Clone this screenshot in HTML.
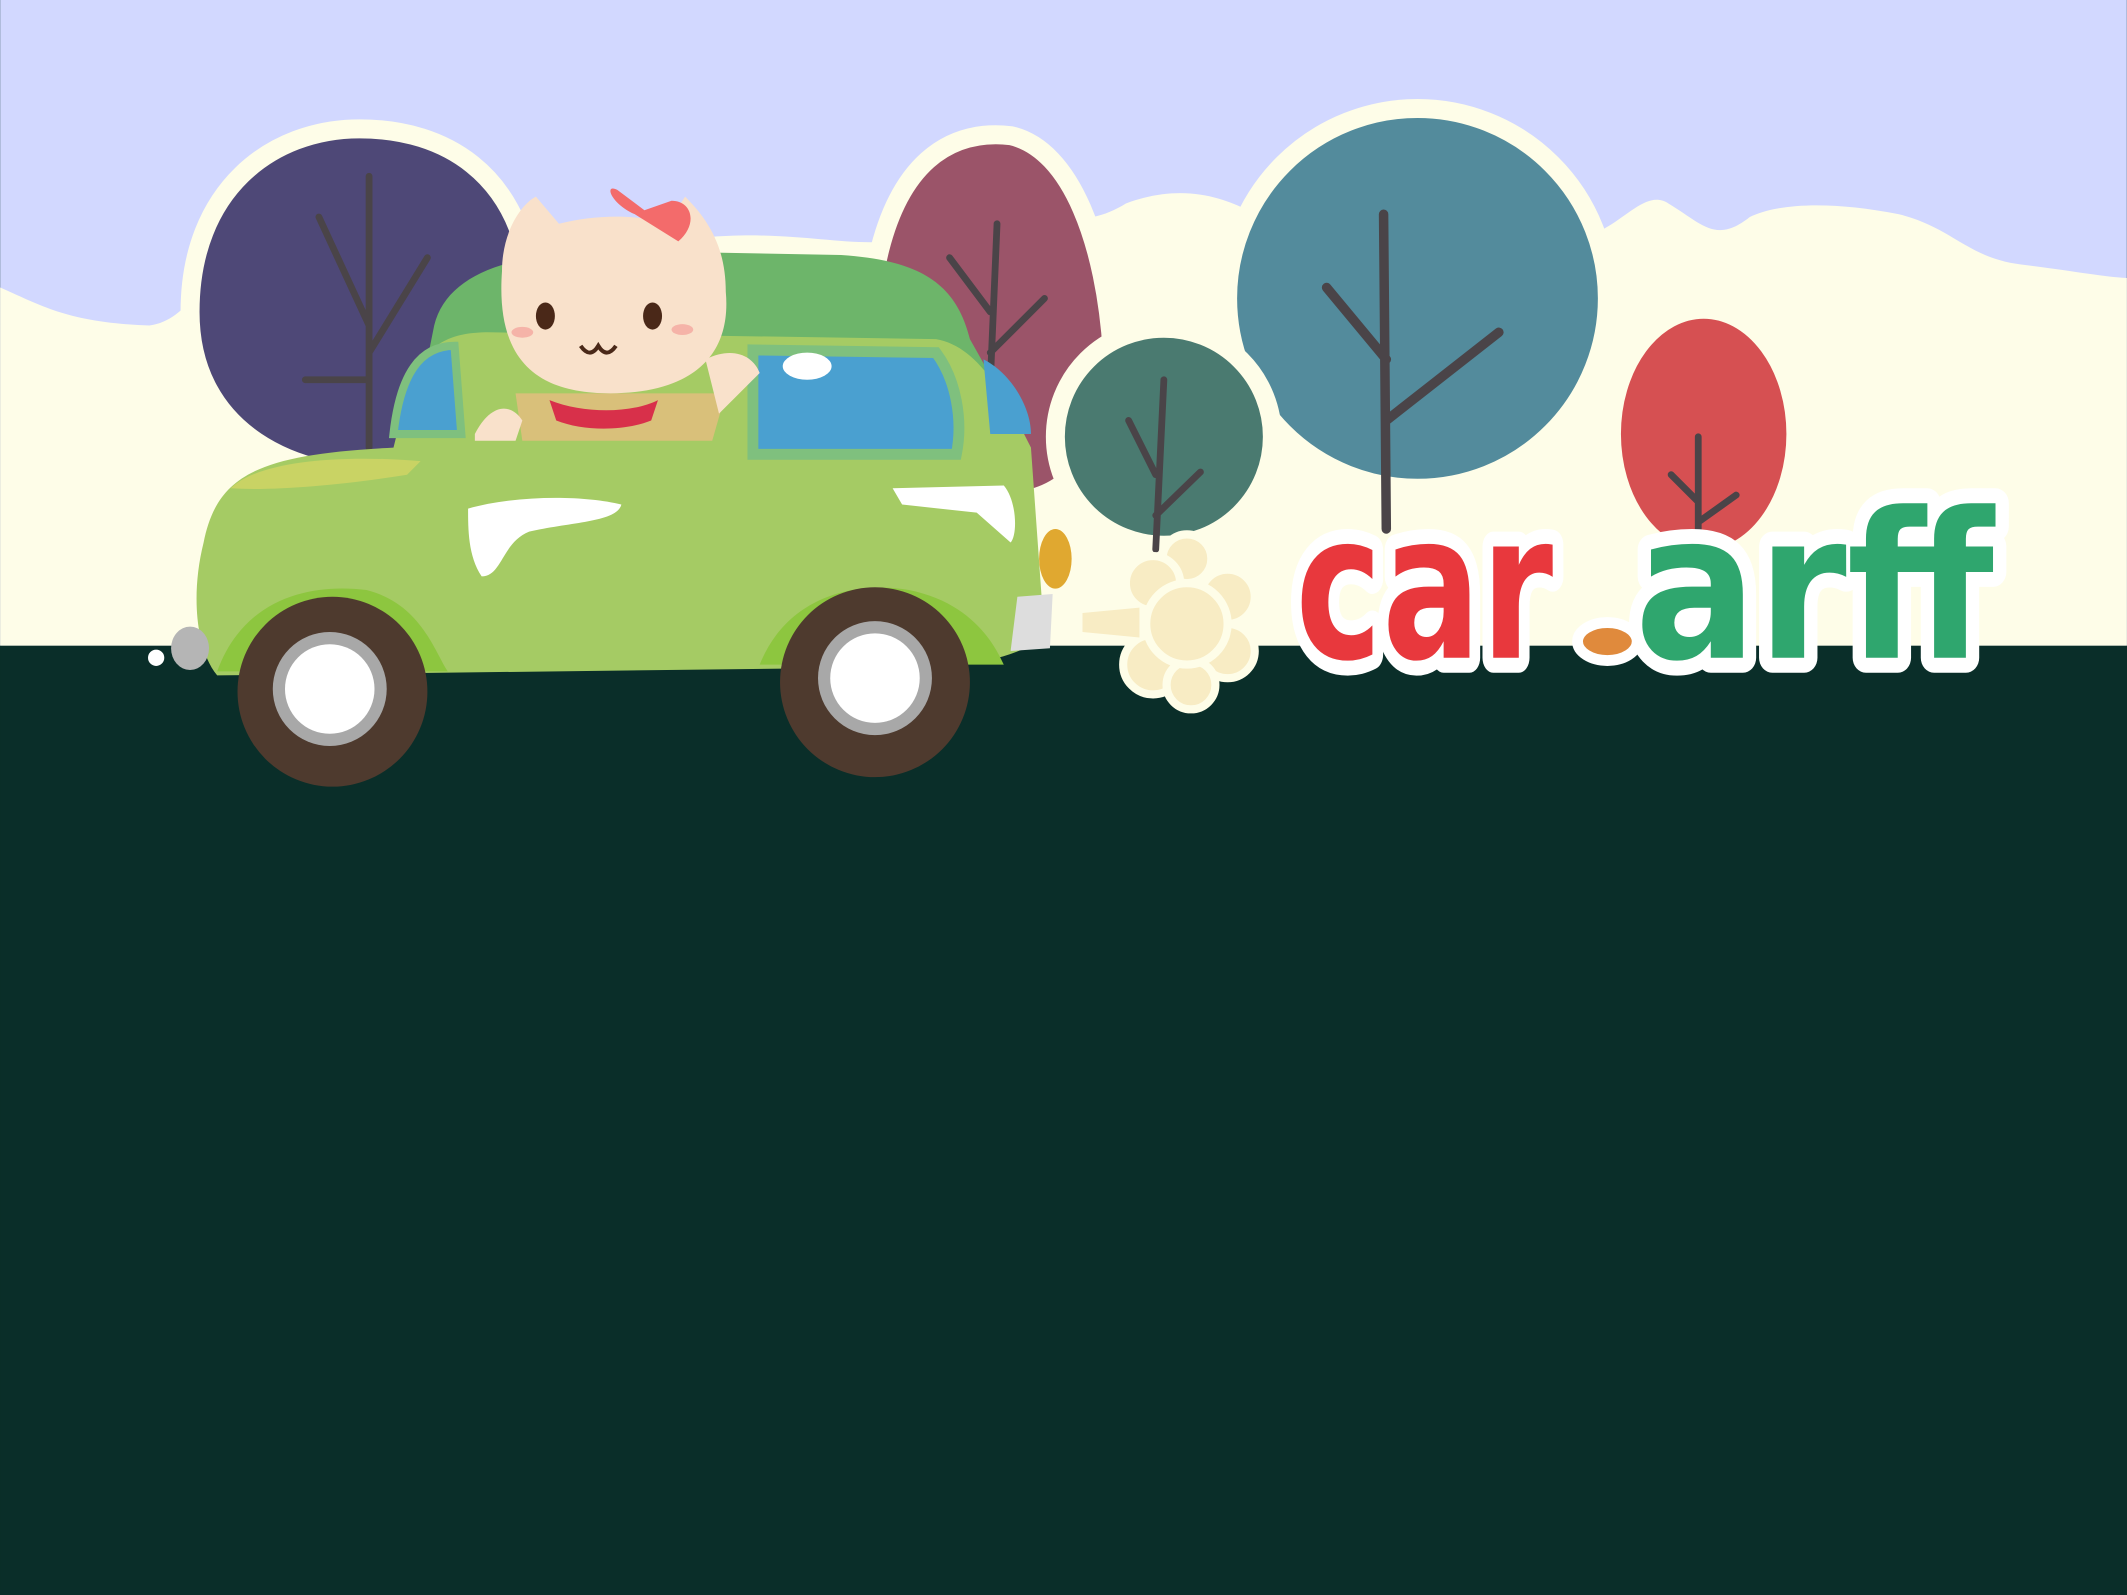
<!DOCTYPE html>
<html><head><meta charset="utf-8"><style>
html,body{margin:0;padding:0;background:#0a2e29;overflow:hidden}
svg{display:block}
</style></head><body>
<svg width="2127" height="1595" viewBox="0 0 1568 1176" xmlns="http://www.w3.org/2000/svg">
<rect width="1568" height="1176" fill="#0a2e29"/>
<rect width="1568" height="476" fill="#d2d8ff"/>
<path d="M0 212 C30 225 50 238 110 240 C140 236 150 200 180 190 C300 170 420 185 520 175 C600 168 640 190 690 170 C760 150 790 175 830 150 C870 135 900 145 920 155 C1000 160 1080 175 1180 170 C1200 160 1215 140 1230 150 C1255 165 1265 180 1290 160 C1310 150 1350 148 1400 158 C1440 168 1450 190 1490 195 C1530 200 1550 204 1568 205 L1568 476 L0 476 Z" fill="#fefde8"/>
<g stroke="#fefde8" stroke-width="14">
<path d="M140 230 C140 140 200 95 265 95 C330 95 380 130 390 200 C395 280 360 340 290 350 C220 355 140 320 140 230 Z" fill="#4e4877"/>
<path d="M645 200 C660 120 700 95 745 100 C790 110 815 180 820 260 C820 330 790 370 740 370 C690 370 640 300 645 200 Z" fill="#9b5469"/>
<circle cx="1045" cy="220" r="140" fill="#538b9c"/>
<ellipse cx="1256" cy="320" rx="68" ry="92" fill="#d65052"/>
<circle cx="858" cy="322" r="80" fill="#4a7a70"/>
</g>
<g stroke="#4a4448" stroke-width="5" fill="none" stroke-linecap="round">
<path d="M272 130 L272 330 M272 240 L235 160 M272 280 L225 280 M272 260 L315 190"/>
<path d="M735 165 L728 330 M730 230 L700 190 M730 260 L770 220"/>
<path d="M1020 158 L1022 390 M1022 265 L978 212 M1022 310 L1105 245" stroke-width="7"/>
<path d="M858 280 L852 405 M852 350 L832 310 M852 380 L885 348"/>
<path d="M1252 322 L1252 390 M1252 370 L1232 350 M1252 385 L1280 365"/>
</g>
<path d="M320 240 C330 200 380 185 460 185 L620 188 C680 192 705 210 715 250 L760 330 L300 340 Z" fill="#6db56a"/>
<path d="M150 400 C160 350 190 335 290 330 L300 290 C310 255 330 245 360 245 L690 250 C720 255 740 290 760 330 L770 470 C740 490 700 492 660 492 L160 498 C145 480 140 440 150 400 Z" fill="#a5cb64"/>
<path d="M170 360 C190 340 250 335 310 340 L300 350 C250 358 200 362 170 360 Z" fill="#c9d364"/>
<path d="M290 320 C295 275 310 255 335 255 L340 320 Z" fill="#4aa0d0" stroke="#7fc07e" stroke-width="6"/>
<path d="M555 258 L690 260 C705 280 710 310 705 335 L555 335 Z" fill="#4aa0d0" stroke="#7fc07e" stroke-width="8"/>
<path d="M725 265 C745 275 760 300 760 320 L730 320 Z" fill="#4aa0d0"/>
<ellipse cx="595" cy="270" rx="18" ry="10" fill="#fff"/>
<path d="M345 375 C380 365 430 365 458 372 C455 385 420 385 390 392 C370 400 370 425 355 425 C345 410 345 390 345 375 Z" fill="#fff"/>
<path d="M658 360 L740 358 C750 370 750 395 745 400 L720 378 L665 372 Z" fill="#fff"/>
<path d="M380 290 L535 290 L525 325 L385 325 Z" fill="#d9c07a"/>
<path d="M405 295 C430 305 465 305 485 295 L480 310 C460 318 430 318 410 310 Z" fill="#d8304a"/>
<path d="M520 265 C540 255 555 262 560 275 L530 305 Z" fill="#f9e1cb"/>
<path d="M350 320 C360 300 375 295 385 310 L380 325 L350 325 Z" fill="#f9e1cb"/>
<path d="M370 200 C370 170 385 150 395 145 L412 165 C440 158 470 158 492 165 L505 145 C520 160 535 180 535 215 C540 270 500 290 450 290 C400 290 365 270 370 200 Z" fill="#f9e1cb"/>
<path d="M468 158 C450 150 445 135 455 140 L475 155 L495 148 C510 148 515 165 500 178 Z" fill="#f36b6b"/>
<ellipse cx="402" cy="233" rx="7" ry="10" fill="#4a2818"/>
<ellipse cx="481" cy="233" rx="7" ry="10" fill="#4a2818"/>
<ellipse cx="385" cy="245" rx="8" ry="4" fill="#f5b3a8"/>
<ellipse cx="503" cy="243" rx="8" ry="4" fill="#f5b3a8"/>
<path d="M428 255 Q435 265 441 255 Q447 265 454 255" stroke="#4a2818" stroke-width="3" fill="none"/>
<path d="M160 495 C180 440 230 430 270 435 C310 445 320 480 330 495 Z" fill="#8dc63f"/>
<path d="M560 490 C580 440 630 428 670 435 C720 445 735 480 740 490 Z" fill="#8dc63f"/>
<circle cx="245" cy="510" r="70" fill="#4e3a2e"/>
<circle cx="243" cy="508" r="42" fill="#a8a8a8"/>
<circle cx="243" cy="508" r="33" fill="#fff"/>
<circle cx="645" cy="503" r="70" fill="#4e3a2e"/>
<circle cx="645" cy="500" r="42" fill="#a8a8a8"/>
<circle cx="645" cy="500" r="33" fill="#fff"/>
<ellipse cx="778" cy="412" rx="12" ry="22" fill="#e0a830"/>
<path d="M750 440 L776 438 L774 478 L745 480 Z" fill="#ddd"/>
<ellipse cx="140" cy="478" rx="14" ry="16" fill="#b5b5b5"/>
<circle cx="115" cy="485" r="6" fill="#fff"/>
<g fill="#f8ecc4" stroke="#fefde8" stroke-width="6">
<circle cx="875" cy="412" r="18"/><circle cx="905" cy="440" r="20"/><circle cx="850" cy="430" r="20"/>
<circle cx="905" cy="480" r="20"/><circle cx="850" cy="490" r="22"/><circle cx="878" cy="505" r="18"/>
<circle cx="875" cy="460" r="30"/>
</g>
<path d="M798 452 L840 448 L840 470 L798 466 Z" fill="#f8ecc4"/>
<g font-family="'DejaVu Sans','Liberation Sans',sans-serif" font-weight="bold" font-size="150" stroke="#fff" stroke-width="22" stroke-linejoin="round" paint-order="stroke">
<text x="955" y="485" fill="#e8383d" textLength="190" lengthAdjust="spacingAndGlyphs">car</text>
<text x="1205" y="485" fill="#2fa66e" textLength="265" lengthAdjust="spacingAndGlyphs">arff</text>
</g>
<ellipse cx="1185" cy="473" rx="22" ry="14" fill="#e08a3c" stroke="#fff" stroke-width="8"/>
</svg>
</body></html>
